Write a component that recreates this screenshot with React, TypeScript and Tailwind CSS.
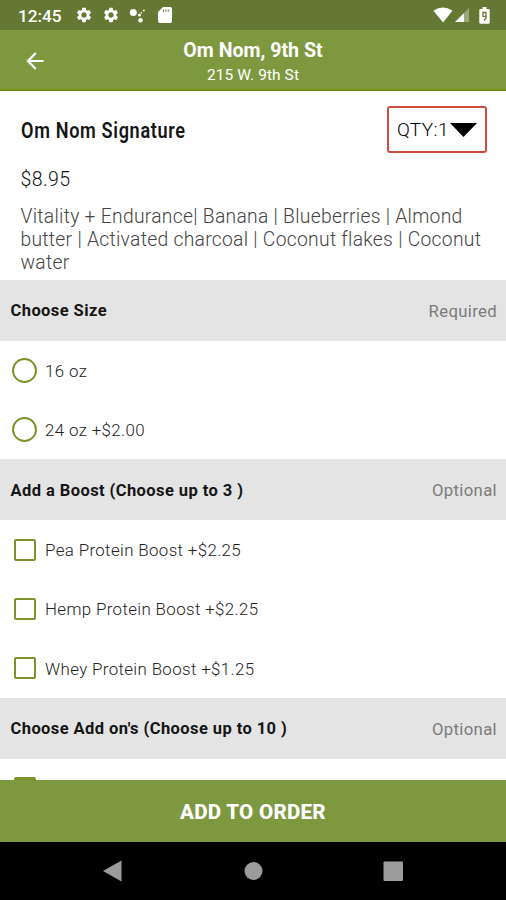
import type { ReactNode } from "react";
import { MdSettings, MdArrowBack } from "react-icons/md";

function StatusBar() {
  return (
    <div className="flex h-[30px] shrink-0 items-center bg-[#647833] pl-[18px] pr-[15px] text-white">
      <span className="w-[46px] whitespace-nowrap pt-[3px] text-[17.2px] font-medium leading-none">12:45</span>
      <MdSettings className="ml-[11px] size-[18px]" />
      <MdSettings className="ml-[9px] size-[18px]" />
      <svg className="ml-[9px] size-[18px]" viewBox="0 0 18 18" fill="currentColor">
        <circle cx="4.300" cy="6.500" r="3.500" />
        <circle cx="10.500" cy="9" r="1.500" />
        <circle cx="11.500" cy="14.300" r="2.200" />
        <circle cx="14.800" cy="4.500" r="1" />
        <circle cx="12.300" cy="6.800" r=".8" />
      </svg>
      <svg className="ml-[11px] h-[16px] w-[14px]" viewBox="0 0 14 16" fill="currentColor">
        <path fillRule="evenodd" d="M5 0h7.300Q14 0 14 1.700v12.600q0 1.700-1.700 1.700H1.700Q0 16 0 14.300V5zM5 2.600v2.200h1V2.600zM7.400 2.600v2.200h1V2.600zM9.800 2.600v2.200h1V2.600z" />
      </svg>
      <svg className="ml-auto h-[16px] w-[20px]" viewBox="0 0 20 16" fill="currentColor">
        <path d="M.5 3.800Q10-3 19.500 3.800L10 15.500z" />
      </svg>
      <svg className="ml-[2px] mt-px size-[15px]" viewBox="0 0 16 16" fill="currentColor">
        <path opacity=".35" d="M15 0v15H0z" />
        <path d="M9.500 5.500V15H0z" />
      </svg>
      <svg className="ml-[9px] mr-px h-[17px] w-[11px]" viewBox="0 0 11 17">
        <path fill="currentColor" d="M3.500 0h4v2H9.500q1.200 0 1.200 1.200v12.300q0 1.200-1.200 1.200H1.500Q.3 16.700.3 15.500V3.200Q.3 2 1.500 2h2z" />
        <path fill="none" stroke="#647833" strokeWidth="1.300" d="M7 5v4.300H4V5.500h3M7 9v2L5 13.500" />
      </svg>
    </div>
  );
}

function Header() {
  return (
    <header className="grid h-[60.500px] shrink-0 grid-cols-[60px_1fr_60px] items-center border-b-2 border-[#748b18] bg-[#7e9840] text-white">
      <MdArrowBack className="ml-[22px] mt-[3px] size-[26px]" />
      <div className="flex flex-col items-center whitespace-nowrap pt-[8px]">
        <h1 className="text-[19.6px] font-bold leading-[24px]">Om Nom, 9th St</h1>
        <p className="text-[15.5px] leading-[24px] tracking-[0.07px]">215 W. 9th St</p>
      </div>
    </header>
  );
}

function Section({ title, note, children }: { title: string; note: string; children: ReactNode }) {
  return (
    <section>
      <div className="flex h-[61px] items-center justify-between bg-[#e4e4e4] pl-[10.500px] pr-[9px] pt-[2px]">
        <h3 className="text-[16.5px] font-bold tracking-[0.42px] text-[#151515]">{title}</h3>
        <span className="text-[16.7px] tracking-[0.35px] text-[#7b7b7b]">{note}</span>
      </div>
      {children}
    </section>
  );
}

function Option({ label, round = false }: { label: string; round?: boolean }) {
  return (
    <div className="flex h-[59.200px] items-center">
      {round ? (
        <span className="ml-[12px] size-[25px] rounded-full border-2 border-[#7c932d]" />
      ) : (
        <span className="ml-[14px] mr-[1px] size-[22px] rounded-[2px] border-2 border-[#7c932d]" />
      )}
      <span className="ml-[8px] whitespace-nowrap pt-[2px] text-[16.9px] font-light tracking-[0.36px] text-[#222]">
        {label}
      </span>
    </div>
  );
}

export default function App() {
  return (
    <div className="flex h-[900px] w-[506px] flex-col overflow-hidden bg-white font-['Roboto',sans-serif]">
      <StatusBar />
      <Header />
      <main className="min-h-0 flex-1 overflow-hidden">
        <div className="h-[189.500px] pl-[20.500px] pr-[19px] pt-[15.500px]">
          <div className="flex h-[47px] items-center justify-between">
            <h2 className="w-[200px] origin-left scale-x-[0.83] whitespace-nowrap pt-[3px] text-[21.8px] font-semibold tracking-[0.8px] text-[#151515]">
              Om Nom Signature
            </h2>
            <div className="flex h-[47px] w-[100px] items-center rounded-[3px] border-2 border-[#cf4e40] pl-[8px] text-[19px] font-light text-black">
              <span className="pt-[2px] tracking-[0.4px]">QTY:1</span>
              <svg className="ml-px h-[14px] w-[27px] shrink-0" viewBox="0 0 27 14">
                <path d="M0 0h27L13.500 14z" />
              </svg>
            </div>
          </div>
          <p className="mt-[14px] text-[19.5px] font-light leading-[26px] tracking-[0.4px] text-[#111]">$8.95</p>
          <p className="mt-[12px] whitespace-nowrap text-[19.3px] font-light leading-[23px] tracking-[0.29px] text-[#444]">
            Vitality + Endurance| Banana | Blueberries | Almond
            <br />
            butter | Activated charcoal | Coconut flakes | Coconut
            <br />
            water
          </p>
        </div>
        <Section title="Choose Size" note="Required">
          <Option label="16 oz" round />
          <Option label="24 oz +$2.00" round />
        </Section>
        <Section title="Add a Boost (Choose up to 3 )" note="Optional">
          <Option label="Pea Protein Boost +$2.25" />
          <Option label="Hemp Protein Boost +$2.25" />
          <Option label="Whey Protein Boost +$1.25" />
        </Section>
        <Section title="Choose Add on's (Choose up to 10 )" note="Optional">
          <div className="ml-[14px] mt-[18px] h-[22px] w-[22px] rounded-[2px] border-[3px] border-[#7c932d]" />
        </Section>
      </main>
      <button className="h-[62px] shrink-0 bg-[#7e9840] pt-[2px] text-[20.6px] font-extrabold tracking-[0.25px] text-white">
        ADD TO ORDER
      </button>
      <nav className="h-[58px] shrink-0 bg-black">
        <svg className="h-[58px] w-[506px]" viewBox="0 0 506 58" fill="#9c9c9c">
          <path d="M103 29l18.500-10.500v21z" />
          <circle cx="253.500" cy="29" r="9" />
          <rect x="383.500" y="19.500" width="19.500" height="19.500" rx="1" />
        </svg>
      </nav>
    </div>
  );
}
